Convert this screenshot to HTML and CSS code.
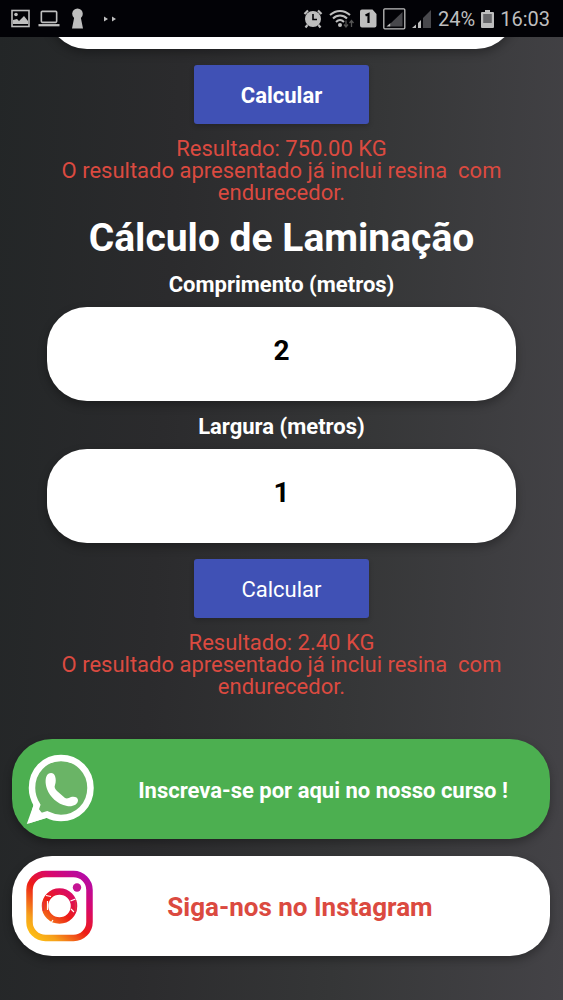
FILE: index.html
```html
<!DOCTYPE html>
<html lang="pt-BR">
<head>
<meta charset="utf-8">
<meta name="viewport" content="width=device-width, initial-scale=1">
<title>Cálculo de Laminação</title>
<link rel="stylesheet" href="styles.css">
</head>
<body>
<header class="status">
  <div class="status-group notices">
    <svg width="19" height="19" viewBox="0 0 19 19" fill="none" stroke="currentColor"><rect x="1" y="1.5" width="17" height="16" stroke-width="1.6"/><circle cx="5" cy="5.5" r="1.8" fill="currentColor" stroke="none"/><path d="M2 15v-4l4-1 2 2 5-5 4 5v3z" fill="currentColor" stroke="none"/></svg>
    <svg width="22" height="19" viewBox="0 0 23 19" fill="none" stroke="currentColor"><rect x="3.5" y="2" width="16" height="11.500" rx="1" stroke-width="1.700"/><path d="M.5 16.500h22" stroke-width="2.400"/></svg>
    <svg width="13" height="21" viewBox="0 0 13 21" fill="currentColor"><circle cx="6.500" cy="5.800" r="5.300"/><path d="M3.500 8h6l.8 4L12 20.500H1L2.700 12z"/></svg>
    <svg class="dots" width="13" height="6" viewBox="0 0 13 6" fill="currentColor"><path d="M0 .5L4 3 0 5.500zM8 .5L12 3 8 5.500z"/></svg>
  </div>
  <div class="status-group">
    <svg width="20" height="20" viewBox="0 0 20 20"><circle cx="10" cy="10" r="8" fill="currentColor"/><path d="M1.500 5L5 1.500M15 1.500L18.500 5M4.500 16L2.500 18.500M15.500 16l2 2.500" stroke="currentColor" stroke-width="2.200"/><path d="M10 5v5.500h4" fill="none" stroke="#020206" stroke-width="1.600"/></svg>
    <svg width="25" height="20" viewBox="0 0 25 20" fill="none" stroke="currentColor" stroke-width="2"><path d="M1 6c6-5.500 14-5.500 20 0M4 9.500c4-4 10-4 14 0M7 13c2.500-2.500 5.500-2.500 8 0"/><circle cx="11" cy="16" r="2" fill="currentColor" stroke="none"/><path d="M17 11.500v6m-2-2l2 2.500 2-2.500M22.500 18v-6m-2 2l2-2.500 2 2.500" stroke="#555" stroke-width="1.300"/></svg>
    <svg width="17" height="19" viewBox="0 0 17 19"><path d="M2 .5h10.500L16.500 5v11.500a2 2 0 0 1-2 2H2a2 2 0 0 1-2-2v-14a2 2 0 0 1 2-2z" fill="currentColor"/><path d="M5.500 6.500L8.500 5v9" fill="none" stroke="#020206" stroke-width="2.200"/></svg>
    <svg width="23" height="22" viewBox="0 0 23 22"><rect x=".8" y=".8" width="21" height="20" rx="1" fill="none" stroke="currentColor" stroke-width="1.300"/><path d="M19.500 4v14.500H8V15z" fill="#48484c"/><path d="M3.500 18.500H7.500V15z" fill="currentColor"/></svg>
    <svg width="20" height="20" viewBox="0 0 20 20"><path d="M11 19V9l8-8v18z" fill="#48484c"/><path d="M0 19h4v-3.500zM6 19h3v-8l-3 3z" fill="currentColor"/></svg>
    <span>24%</span>
    <svg width="13" height="20" viewBox="0 0 13 20"><path d="M4 1h5v2h3a1 1 0 0 1 1 1v14a1 1 0 0 1-1 1H1a1 1 0 0 1-1-1V4a1 1 0 0 1 1-1h3z" fill="currentColor"/><path d="M2.200 5h8.600v9H2.200z" fill="#68686b"/></svg>
    <span>16:03</span>
  </div>
</header>
<main class="content">
  <div class="clip"><div class="field"></div></div>
  <button class="calc bold" type="button">Calcular</button>
  <p class="result">Resultado: 750.00 KG<br>O resultado apresentado já inclui resina&nbsp; com endurecedor.</p>
  <h1 class="title">Cálculo de Laminação</h1>
  <label class="label" for="length">Comprimento (metros)</label>
  <input class="field" id="length" type="text" inputmode="decimal" value="2">
  <label class="label" for="width">Largura (metros)</label>
  <input class="field" id="width" type="text" inputmode="decimal" value="1">
  <button class="calc" type="button">Calcular</button>
  <p class="result">Resultado: 2.40 KG<br>O resultado apresentado já inclui resina&nbsp; com endurecedor.</p>
  <nav class="links">
    <a class="link course" href="#">
      <svg class="logo" viewBox="0 0 68 72"><path d="M35 5C18.500 5 6 18 6 35c0 7 2 12 5 17L6 66l15-4.500c4 2 9 3.500 14 3.500 16.500 0 29.500-13 29.500-30S51.500 5 35 5z" fill="#6ab466" stroke="#fff" stroke-width="6.500"/><path d="M2.500 70.500L8 50l12 15z" fill="#fff"/><path d="M22 21c3-2 6-1 7 2 1 3 1 6 0 9-1 2 0 4 2 6l8 7c2 1 4 0 6-1 3-1 7 0 7 3 0 5-6 7-11 6-10-2-17-9-20-17-2-6-2-12 1-15z" fill="#fff"/></svg>
      <span class="link-text">Inscreva-se por aqui no nosso curso !</span>
    </a>
    <a class="link social" href="#">
      <svg class="logo" viewBox="0 0 68 72" fill="none"><defs><linearGradient id="warm" gradientUnits="userSpaceOnUse" x1="4" y1="70" x2="62" y2="4"><stop offset="0" stop-color="#ffc812"/><stop offset=".2" stop-color="#f6a01b"/><stop offset=".48" stop-color="#ed1c16"/><stop offset=".72" stop-color="#d8086c"/><stop offset="1" stop-color="#b00bae"/></linearGradient></defs><rect x="3.500" y="4" width="60" height="64" rx="16" stroke="url(#warm)" stroke-width="6.500"/><circle cx="51" cy="17.500" r="4.200" fill="#c51494"/><circle cx="33.500" cy="36" r="14.500" stroke="url(#warm)" stroke-width="6.500"/><path d="M20 25.500l5 1M21.500 31v9M25 53l2-3M44.500 31l5-2M45 39l3 3" stroke="#fff" stroke-width="1.200"/><path d="M17.500 32v9M49.500 30v12" stroke="#df3040" stroke-width="1.500"/></svg>
      <span class="link-text">Siga-nos no Instagram</span>
    </a>
  </nav>
</main>
</body>
</html>
```
FILE: styles.css
```css
* { box-sizing: border-box; }
body {
  margin: 0;
  min-height: 100vh;
  font-family: Roboto, "Liberation Sans", sans-serif;
  color: #fff;
  background: linear-gradient(93deg, #232627 0%, #2b2b2d 30%, #353637 62%, #444347 100%);
}
.status {
  display: flex;
  justify-content: space-between;
  align-items: center;
  height: 37px;
  padding: 0 13px 0 11px;
  background: #020206;
  color: #bebebe;
  font-size: 20px;
}
.status-group { display: flex; align-items: center; gap: 6px; }
.notices { gap: 8px; }
.notices svg:nth-child(3) { margin-left: 3px; }
.notices .dots { margin-left: 12px; }
.content { display: flex; flex-direction: column; align-items: center; }
.clip {
  display: flex;
  flex-direction: column;
  justify-content: flex-end;
  align-items: center;
  width: 100%;
  height: 12px;
  margin-bottom: 16px;
  clip-path: inset(0 0 -16px 0);
}
.field {
  flex: none;
  width: calc(100% - 94px);
  height: 94px;
  padding: 0 20px 8px;
  border: 0;
  border-radius: 40px;
  background: #fff;
  box-shadow: 0 4px 10px rgba(0, 0, 0, .3);
  color: #000;
  font: bold 28px Roboto, "Liberation Sans", sans-serif;
  text-align: center;
}
.calc {
  width: 175px;
  height: 59px;
  padding: 2px 0 0;
  border: 0;
  border-radius: 3px;
  background: #4051b5;
  box-shadow: 0 2px 5px rgba(0, 0, 0, .2);
  color: #fff;
  font: 22px Roboto, "Liberation Sans", sans-serif;
}
.bold { font-weight: bold; }
.field + .calc { margin-top: 16px; }
.result {
  width: calc(100% - 94px);
  margin: 14px 0 0;
  color: #db4a40;
  font-size: 22px;
  line-height: 22px;
  text-align: center;
}
.title { margin: 12px 0 0; font-size: 39px; line-height: 44px; }
.label { margin: 12px 0 9px; font-size: 22px; font-weight: bold; line-height: 26px; }
.field + .label { margin-top: 13px; }
.links {
  display: flex;
  flex-direction: column;
  gap: 17px;
  width: 100%;
  padding: 41px 13px 44px 12px;
}
.link {
  display: flex;
  align-items: center;
  height: 100px;
  padding: 0 12px 0 14px;
  border-radius: 40px;
  box-shadow: 0 4px 10px rgba(0, 0, 0, .3);
  font-weight: bold;
  text-decoration: none;
}
.course { background: #4caf50; color: #fff; font-size: 22px; }
.social { background: #fff; color: #db4a40; font-size: 26px; }
.logo { flex: none; width: 68px; height: 72px; }
.link-text { flex: 1; padding: 2px 32px 0 0; text-align: center; white-space: nowrap; }
.course .link-text { padding: 2px 0 0 14px; }
```
